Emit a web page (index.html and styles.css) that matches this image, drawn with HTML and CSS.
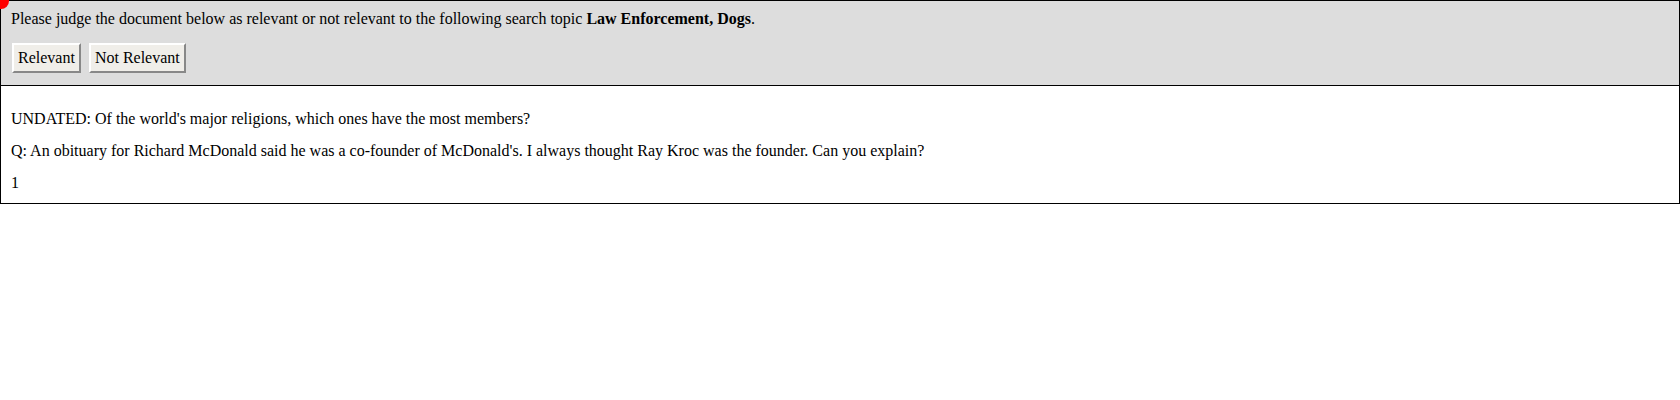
FILE: index.html
```html
<!DOCTYPE html>
<html>
<head>
<meta charset="utf-8">
<link rel="stylesheet" href="styles.css">
</head>
<body>
<span class="dot"></span>
<div class="prompt">
  <div class="question">Please judge the document below as relevant or not relevant to the following search topic <b>Law Enforcement, Dogs</b>.</div>
  <div class="actions">
    <button class="btn">Relevant</button>
    <button class="btn">Not Relevant</button>
  </div>
</div>
<div class="doc">
  <p>UNDATED: Of the world's major religions, which ones have the most members?</p>
  <p>Q: An obituary for Richard McDonald said he was a co-founder of McDonald's. I always thought Ray Kroc was the founder. Can you explain?</p>
  <p>1</p>
</div>
</body>
</html>
```
FILE: styles.css
```css
html, body {
  margin: 0;
  padding: 0;
  background: #fff;
}
body {
  font-family: "Liberation Serif", "Times New Roman", serif;
  font-size: 16px;
  color: #000;
  position: relative;
}
.dot {
  position: absolute;
  left: -7px;
  top: -7px;
  width: 16px;
  height: 16px;
  border-radius: 50%;
  background: #f00;
}
.prompt {
  background: #dddddd;
  border: 1px solid #000;
  padding: 8px 10px 12px;
}
.question {
  line-height: 19px;
}
.actions {
  display: flex;
  gap: 8px;
  margin-top: 15px;
  margin-left: 1px;
}
.btn {
  font-family: "Liberation Serif", "Times New Roman", serif;
  font-size: 16px;
  background: #f0eee9;
  border: 2px solid;
  border-color: #fff #888 #888 #fff;
  padding: 4px 4px;
  height: 30px;
  line-height: 18px;
  color: #000;
}
.doc {
  border: 1px solid #000;
  border-top: none;
  padding: 8px 10px 11px;
}
.doc p {
  margin: 16px 0 0;
  line-height: 18px;
}
.doc p + p {
  margin-top: 14px;
}
```
